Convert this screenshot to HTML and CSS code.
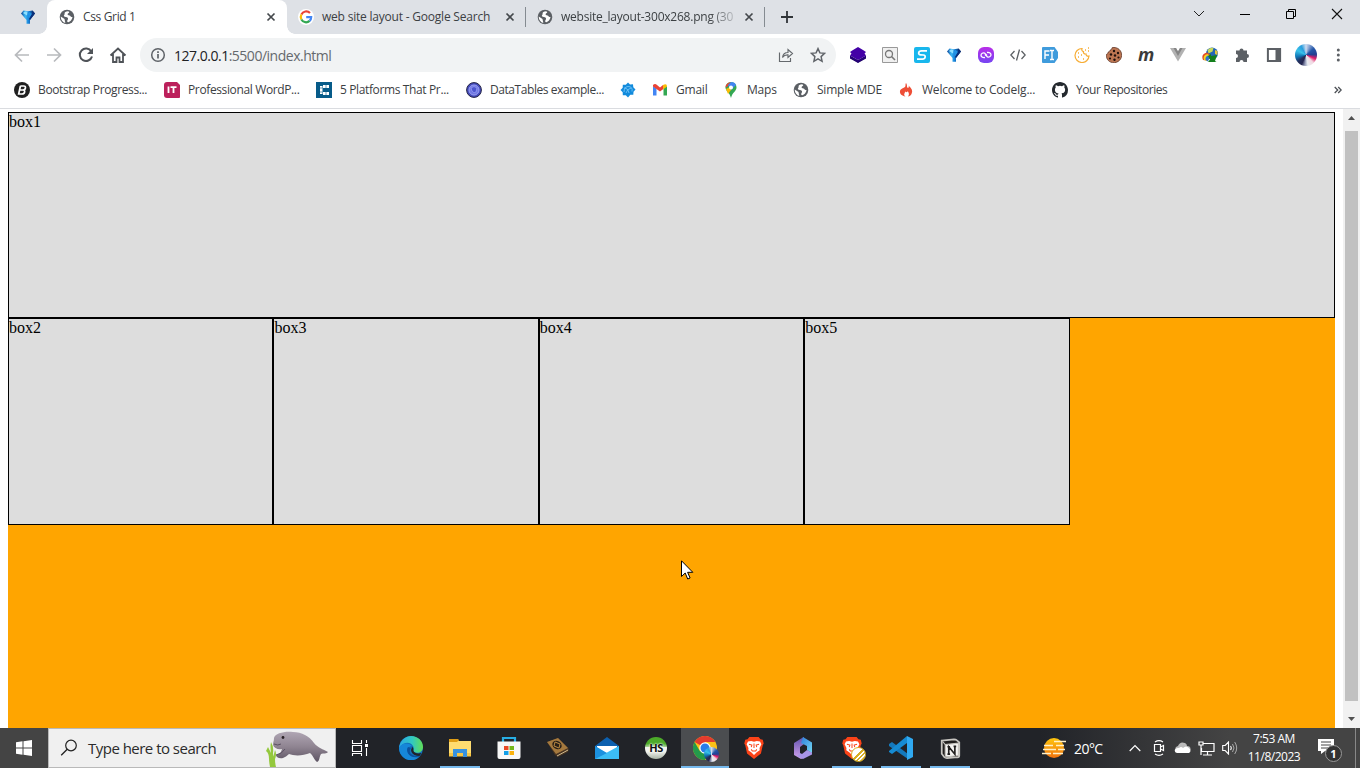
FILE: index.html
```html
<!DOCTYPE html>
<html lang="en">
<head>
<meta charset="utf-8">
<title>Css Grid 1</title>
<link rel="stylesheet" href="styles.css">
</head>
<body>
<svg class="defs" width="0" height="0">
  <defs>
    <linearGradient id="gem" x1="0" y1="0" x2="1" y2="0"><stop offset="0" stop-color="#0b3f94"/><stop offset=".3" stop-color="#3db9f5"/><stop offset=".55" stop-color="#1680d8"/><stop offset="1" stop-color="#061c52"/></linearGradient>
    <linearGradient id="edgeTop" x1="0" y1="0" x2="1" y2="0"><stop offset="0" stop-color="#2aa8e5"/><stop offset=".55" stop-color="#32c8c0"/><stop offset="1" stop-color="#62df55"/></linearGradient>
    <linearGradient id="manatee" x1="0" y1="0" x2="0" y2="1"><stop offset="0" stop-color="#b0a6b4"/><stop offset=".5" stop-color="#8f8491"/><stop offset="1" stop-color="#5d5463"/></linearGradient>
    <linearGradient id="mailG" x1="0" y1="0" x2="1" y2="1"><stop offset="0" stop-color="#1a8bdd"/><stop offset="1" stop-color="#46cbff"/></linearGradient>
    <linearGradient id="mA" x1="0" y1="0" x2="0" y2="1"><stop offset="0" stop-color="#6152ae"/><stop offset="1" stop-color="#d3a3ee"/></linearGradient>
    <linearGradient id="mB" x1="0" y1="0" x2="1" y2="1"><stop offset="0" stop-color="#2d7edb"/><stop offset="1" stop-color="#74d9f4"/></linearGradient>
    <linearGradient id="sunG" x1="0" y1="0" x2="0" y2="1"><stop offset="0" stop-color="#ffc60d"/><stop offset="1" stop-color="#f0720e"/></linearGradient>
    <linearGradient id="pur" x1="0" y1="0" x2="0" y2="1"><stop offset="0" stop-color="#b92de8"/><stop offset="1" stop-color="#7546f2"/></linearGradient>
    <symbol id="i-gem" viewBox="0 0 16 16"><path d="M1 4.500 3.500 1.500 8 2.200l4.500-.7L15 4.500 10 11v3.800H6.500V11z" fill="url(#gem)"/><path d="M3 4l2-1.500h2.500L7 6.500z" fill="#8fe0ff"/><path d="m8 4 1.500-1 2.500 2-3.500 5z" fill="#2293e6"/><path d="M12.500 1.500 15 4.500 10 11l-1-1 3-5z" fill="#0a2f7a"/></symbol>
    <symbol id="i-globe" viewBox="0 0 16 16"><circle cx="8" cy="8" r="7.300" fill="#5b5f64"/><path d="M9.200 2.200c-2.300 0-4 1.200-3.600 2.500.3 1-1.200 1.500-.6 2.600.6.900 3.100.3 3.900 1.600.7 1.300-1 2.200-.7 3.500.2.800 1.200 1.200 2.500.2 1.600-1.100 2.600-2.900 2.800-4.600-.9.300-1.800-.3-2.400-1.200-.7-.9-2.300-.5-2.500-1.400-.3-1 1.600-1.300 1.700-2.200z" fill="#fff"/><path d="M1.700 7.500 5.500 9.900l.8 4.200C3.800 13.300 1.700 11 1.700 7.500z" fill="#fff"/></symbol>
    <symbol id="i-x" viewBox="0 0 10 10"><path d="m1.500 1.500 7 7m0-7-7 7" stroke="#44484c" stroke-width="1.700" fill="none"/></symbol>
    <symbol id="i-brave" viewBox="0 0 22 26"><path d="M6 1h10l2 2.500 2.500.5 1 4-1 2-2 9L11 25l-7.500-6-2-9-1-2 1-4L4 3.500z" fill="#fb4318"/><path d="m4.500 6 3.500-.5 3 .8 3-.8 3.500.5L19 9l-2 4 .2 2.500-3.200 2-3 3.200-3-3.200-3.200-2L5 13 3 9z" fill="#fff"/><path d="m5.500 9 3.200.8L8 12m8.500-3-3.200.8.700 2.200M11 8v5M8 14.500l1.200 1.700h3.600l1.200-1.700" stroke="#fb4318" stroke-width="1.100" fill="none"/></symbol>
  </defs>
</svg>
<div class="desktop">
  <header class="tabs">
    <div class="pinned"><svg width="16" height="16"><use href="#i-gem"/></svg></div>
    <div class="tab active"><svg width="16" height="16"><use href="#i-globe"/></svg><span class="title t1">Css Grid 1</span><svg class="close" width="10" height="10"><use href="#i-x"/></svg></div>
    <div class="tab second"><svg width="16" height="16" viewBox="0 0 16 16"><circle cx="8" cy="8" r="8" fill="#fff"/><g fill="none" stroke-width="2.200"><path d="M12 4A5.300 5.300 0 0 0 3.400 5.500" stroke="#ea4335"/><path d="M3.400 5.500a5.300 5.300 0 0 0 0 5" stroke="#fbbc05"/><path d="M3.400 10.500a5.300 5.300 0 0 0 8.200 1.400" stroke="#34a853"/><path d="M11.600 11.900A5.200 5.200 0 0 0 13.200 8.100H8.200" stroke="#4285f4"/></g></svg><span class="title t2">web site layout - Google Search</span><svg class="close" width="10" height="10"><use href="#i-x"/></svg></div>
    <div class="tab third"><svg width="16" height="16"><use href="#i-globe"/></svg><span class="title t3">website_layout-300x268.png (30</span><svg class="close" width="10" height="10"><use href="#i-x"/></svg></div>
    <svg class="plus" width="12" height="12" viewBox="0 0 12 12"><path d="M6 0v12M0 6h12" stroke="#303438" stroke-width="1.800"/></svg>
    <div class="window-buttons">
      <svg viewBox="0 0 46 28"><path d="m18 11 5 5 5-5" stroke="#222" fill="none"/></svg>
      <svg viewBox="0 0 46 28"><path d="M18 14.500h10" stroke="#000"/></svg>
      <svg viewBox="0 0 46 28"><path d="M18.500 11.500h7v7h-7zM20.500 11v-1.500h7v7H26" stroke="#000" fill="none"/></svg>
      <svg viewBox="0 0 46 28"><path d="m18 9 10 10m0-10L18 19" stroke="#111" stroke-width="1.100"/></svg>
    </div>
  </header>

  <div class="toolbar">
    <div class="nav">
      <svg viewBox="0 0 32 42"><path d="M29 21H16m6-6.500L15.500 21l6.500 6.500" stroke="#b8babd" stroke-width="1.700" fill="none"/></svg>
      <svg viewBox="0 0 32 42"><path d="M15 21h13m-6-6.500 6.500 6.500-6.500 6.500" stroke="#b8babd" stroke-width="1.700" fill="none"/></svg>
      <svg viewBox="0 0 32 42"><path d="M27.300 17.500A6.200 6.200 0 1 0 28 22.500" stroke="#4f5358" stroke-width="2" fill="none"/><path d="M29 14v6h-6z" fill="#4f5358"/></svg>
      <svg viewBox="0 0 32 42"><path d="M14.500 21.500 22 14.500l7.500 7M17 20v8h3.500v-4.500h3V28H27v-8" stroke="#4f5358" stroke-width="1.800" fill="none"/></svg>
    </div>
    <div class="omnibox">
      <svg width="16" height="16" viewBox="0 0 16 16"><circle cx="8" cy="8" r="6.300" stroke="#5f6368" stroke-width="1.500" fill="none"/><path d="M8 7v4.500M8 4.200v1.700" stroke="#5f6368" stroke-width="1.700"/></svg>
      <span class="url"><b>127.0.0.1</b>:5500/index.html</span>
      <svg class="share" width="16" height="16" viewBox="0 0 16 16"><path d="M1.500 5.500v9h11V11M4.500 10.500C5 7 7 5.500 10 5.500V2.500L14.500 6.500 10 10.500v-2.600c-2.500-.2-4.200.7-5.500 2.600z" stroke="#65696d" stroke-width="1.150" fill="none"/></svg>
      <svg width="16" height="16" viewBox="0 0 16 16"><path d="m8 1.600 1.900 4.300 4.700.5-3.500 3.200 1 4.700L8 11.900l-4.100 2.400 1-4.700L1.400 6.400l4.700-.5z" stroke="#5f6368" stroke-width="1.450" fill="none"/></svg>
    </div>
    <div class="extensions">
      <svg viewBox="0 0 16 16"><path d="M0 9.500 8 14l8-4.500v2L8 16l-8-4.500z" fill="#1d0062"/><path d="m0 5 3-2 5-3 5 3 3 2-1.500 1.500L16 8.500 8 13 0 8.500l1.500-2z" fill="#4300a6"/><path d="m0 8.500 8 4.500 8-4.500v2.300L8 15.500l-8-4.700z" fill="#25007a"/></svg>
      <svg viewBox="0 0 16 16"><path d="M.5.500h15v15H.5z" fill="#f0f0f0" stroke="#999"/><circle cx="7" cy="7" r="3.500" stroke="#777" stroke-width="1.300" fill="none"/><path d="m9.500 9.500 3.500 3.500" stroke="#777" stroke-width="1.600"/></svg>
      <svg viewBox="0 0 16 16"><rect width="16" height="16" rx="2" fill="#18b7ed"/><path d="M13 3.800H7.500C4 3.800 3.800 7.700 6.500 7.800l3 .2c2.700.2 2 4.100-1 4.100H3" stroke="#fff" stroke-width="1.700" fill="none"/></svg>
      <svg viewBox="0 0 16 16"><use href="#i-gem"/></svg>
      <svg viewBox="0 0 16 16"><rect width="16" height="16" rx="6" fill="url(#pur)"/><path d="M7 10.500C4.500 11 2.800 9.500 3 8s2-2.500 3.500-2L9 8.500M9 5.500c2.500-.5 4.200 1 4 2.500s-2 2.500-3.500 2L7 7.500" stroke="#fff" stroke-width="1.300" fill="none"/></svg>
      <svg viewBox="0 0 16 16"><path d="M4.500 4 .8 8l3.700 4m7-8 3.700 4-3.700 4M9.500 2.500l-3 11" stroke="#5c6064" stroke-width="1.300" fill="none"/></svg>
      <svg viewBox="0 0 16 16"><path d="M1 0h11.500L16 5v6l-3.500 5H1q-1 0-1-1V1q0-1 1-1z" fill="#3f9bdc"/><path d="M3 12V4h4.500M3 8h4M8 3.500h1.500q.5 0 .5.500v8q0 .5-.5.500H8M12 3.500h-1.500M12 12.500h-1.500" stroke="#fff" stroke-width="1.400" fill="none"/></svg>
      <svg viewBox="0 0 16 16"><path d="M8 1.500a7 7 0 1 0 7 7.500c-2 .5-3-.5-3-2-2 .2-2.800-1-2.500-2.500C8 4.300 7.500 3 8 1.500z" stroke="#f7ad35" stroke-width="1.200" fill="none"/><path d="M4 6h1m2 2h1m-4 2h1m4 2h1m1-9h1m2 1h1m-1-3h1" stroke="#f7ad35" stroke-width="1.400"/></svg>
      <svg viewBox="0 0 16 16"><path d="M6 .8C8 0 13 .5 15 5c2 5-1 10-6.500 10.700C3 16 0 12 .3 7.500 1.500 7 2.500 6.200 2 5c1.500 0 2.200-.7 2-2 1 .1 1.900-.5 2-2.200z" fill="#bd7652" stroke="#5f3627" stroke-width=".8"/><g fill="#20100d"><circle cx="8" cy="4" r="1.200"/><circle cx="12" cy="6" r="1.200"/><circle cx="5" cy="7.500" r="1.200"/><circle cx="9" cy="8.500" r="1.200"/><circle cx="12.500" cy="10.500" r="1.100"/><circle cx="4" cy="11.500" r="1.100"/><circle cx="8.500" cy="12.800" r="1.200"/></g></svg>
      <span class="letter-m">m</span>
      <svg viewBox="0 0 16 16"><path d="M0 1h6l2 3.500L10 1h6L8 14.500z" fill="#b2b2b2"/><path d="M3.500 1H6l2 3.500L10 1h2.500L8 9z" fill="#858585"/></svg>
      <svg viewBox="0 0 16 16"><circle cx="10" cy="6.500" r="6" fill="#2466b6"/><path d="M5.500 3q3-3 6-2l-1 3.500-4 2z" fill="#c7d95a"/><path d="m13 3 2.500 1v4L13 7z" fill="#e2c53e"/><path d="M1 13Q-1.500 7 5 5.500l3 2-3 3v3z" fill="#e24a26"/><path d="M2 13Q.5 8 5.500 7L8 9l-3 5z" fill="#f4d51f"/><path d="M3.500 13Q3 9.500 6 8.500l2 1-2 5z" fill="#2e74c9"/><path d="m6 9 3-2v2l6-1-2 6 1.500 1H6l2-2.500z" fill="#14801d"/></svg>
      <svg viewBox="0 0 16 16"><path d="M2 3.500h3.500a2 2 0 1 1 4 0H13V7a2 2 0 1 1 0 4v4H9.500a2 2 0 0 0-4 0H2v-4a2 2 0 0 0 0-4z" fill="#5c6065"/></svg>
      <svg viewBox="0 0 16 16"><path d="M1.900 1.900h12.200v12.200H1.900zM10.500 2v12" stroke="#5c6065" stroke-width="2" fill="none"/><path d="M10 2h4v12h-4z" fill="#5c6065"/></svg>
      <span class="avatar"></span>
      <svg viewBox="0 0 16 16"><circle cx="8.300" cy="3" r="1.500" fill="#5c6065"/><circle cx="8.300" cy="8" r="1.500" fill="#5c6065"/><circle cx="8.300" cy="13" r="1.500" fill="#5c6065"/></svg>
    </div>
  </div>

  <nav class="bookmarks">
    <a class="w150 tight"><svg viewBox="0 0 16 16"><circle cx="8" cy="8" r="8" fill="#202020"/><path d="M6.300 4h3.500q2 0 1.600 2t-2.400 2H5.500m3.500 0q2 0 1.600 2t-2.600 2H4.700L6.400 4" stroke="#fff" stroke-width="1.700" fill="none"/></svg><span>Bootstrap Progress...</span></a>
    <a class="w152 tight"><svg viewBox="0 0 16 16"><path d="M3 0h10l3 3v12q0 1-1 1H3q-3 0-3-3V3q0-3 3-3z" fill="#bc205b"/><path d="M4.500 4.500V11M6.500 5.200h6M9.500 5v6" stroke="#fff" stroke-width="1.800"/></svg><span>Professional WordP...</span></a>
    <a class="w150 tight"><svg viewBox="0 0 16 16"><path d="M0 0h16v16H0z" fill="#075b89"/><path d="M4 4h2.500v8H4zM7 3h6v3H7zM7 10h6v3H7z" fill="#fff"/><path d="M3 6h3.500M3 10h3.500M10 3v3M10 10v3" stroke="#075b89" stroke-width=".6"/></svg><span>5 Platforms That Pr...</span></a>
    <a class="w154 tighter"><svg viewBox="0 0 16 16"><circle cx="8" cy="8" r="7.400" fill="#444bbd" stroke="#242443"/><circle cx="8" cy="8" r="5" fill="#7179e4" stroke="#9ba1f2"/><path d="M5 6q3-3 6 0l-1 4q-2 2-4-1z" fill="#4c55cf" stroke="#a7adfa" stroke-width=".6"/></svg><span>DataTables example...</span></a>
    <a class="w32"><svg viewBox="0 0 16 16"><path d="m8 .5 2 2 3-.3.300 3 2.200 2.300-2 2.200-.200 3-3 .1L8 15.500l-2.200-2.200-3-.1-.1-3L.5 8l2.200-2.200.1-3 3-.1z" fill="#128bdc"/><path d="M4 10q0-5 4-5.500 5 0 4 5M4 6q4 0 5 5M6 11q1-4 5-5" stroke="#8bd2ff" stroke-width=".7" fill="none"/></svg></a>
    <a class="w71"><svg viewBox="0 0 16 16"><path d="M1 13.500V4l3.500 2.500v7z" fill="#4285f4"/><path d="M11.500 13.500v-7L15 4v9.500z" fill="#34a853"/><path d="M1 3q2-2 4 0l3 2.500L11 3v4.200L8 9.500 1 4.500z" fill="#ea4335"/><path d="M11 3q4-2 4 1.500l-4 3z" fill="#fbbc04"/></svg><span>Gmail</span></a>
    <a class="w70"><svg viewBox="0 0 16 16"><path d="M8 0a5.300 5.300 0 0 0-5.500 5.300C2.500 9.500 6.500 10 8 16c1.500-6 5.500-6.500 5.500-10.700A5.300 5.300 0 0 0 8 0z" fill="#34a853"/><path d="M8 0 4 5 2.500 5.500Q2.500 1 8 0z" fill="#ea4335"/><path d="M8 0q4 0 5 3L8 8 5 3z" fill="#4285f4"/><path d="m3 7 4-2 1 3-3 4z" fill="#fbbc04"/><circle cx="8" cy="5.400" r="2" fill="#fff"/></svg><span>Maps</span></a>
    <a class="w105"><svg><use href="#i-globe"/></svg><span>Simple MDE</span></a>
    <a class="w154"><svg viewBox="0 0 16 16"><path d="M8 1c2 3 0 4 2 5 1-.5 1-1.300.5-2.500C14 6.500 15 9 13.500 12c-.7 1.400-2 2.200-3.500 2.600 1.600-2 1-4-.5-5.600 0 1.500-1 1.500-2 .5-1.500 2-2 4 0 5C4 14 1.500 12 2 9c.4-2.500 4-3 5-4C8 4 7 2 8 1z" fill="#ee4e36"/></svg><span>Welcome to CodeIg...</span></a>
    <a class="w140 tighter"><svg viewBox="0 0 16 16"><path fill="#24292e" d="M8 0C3.580 0 0 3.580 0 8c0 3.540 2.290 6.530 5.470 7.590.4.070.55-.17.55-.38 0-.19-.010-.82-.010-1.490-2.010.37-2.530-.49-2.690-.94-.09-.23-.48-.94-.82-1.130-.28-.15-.68-.52-.010-.53.63-.010 1.080.58 1.230.82.72 1.210 1.870.87 2.330.66.070-.52.28-.87.51-1.070-1.780-.2-3.640-.89-3.640-3.950 0-.87.31-1.590.82-2.150-.08-.2-.36-1.020.08-2.120 0 0 .67-.21 2.200.82a7.500 7.500 0 0 1 4 0c1.530-1.040 2.200-.82 2.200-.82.44 1.100.16 1.920.08 2.120.51.56.82 1.270.82 2.150 0 3.070-1.870 3.750-3.650 3.950.29.25.54.73.54 1.480 0 1.070-.010 1.930-.010 2.200 0 .21.15.46.55.38A8.010 8.010 0 0 0 16 8c0-4.420-3.580-8-8-8z"/></svg><span>Your Repositories</span></a>
    <svg class="more" width="8" height="8" viewBox="0 0 8 8"><path d="m.7 1 3 3-3 3m3.500-6 3 3-3 3" stroke="#4c5055" stroke-width="1.300" fill="none"/></svg>
  </nav>

  <main class="viewport">
    <div class="grid">
      <div class="box wide">box1</div>
      <div class="box">box2</div>
      <div class="box">box3</div>
      <div class="box">box4</div>
      <div class="box">box5</div>
    </div>
    <div class="scrollbar">
      <svg width="17" height="17" viewBox="0 0 17 17"><path d="m5 11 3.500-4 3.500 4z" fill="#505050"/></svg>
      <div class="thumb"></div>
      <svg width="17" height="17" viewBox="0 0 17 17"><path d="m5 6 3.500 4L12 6z" fill="#505050"/></svg>
    </div>
    <svg class="cursor" width="13" height="21" viewBox="0 0 13 21"><path d="M.5.800v15.700l3.700-3.500 2.500 6 2.400-1-2.500-5.700h5.200z" fill="#fff" stroke="#000"/></svg>
  </main>

  <footer class="taskbar">
    <div class="start"><svg width="16" height="16" viewBox="0 0 16 16"><path d="M0 2.200 6.500 1.300v6.200H0zM7.500 1.200 16 0v7.500H7.500zM0 8.500h6.500v6.200L0 13.800zM7.500 8.500H16V16l-8.500-1.200z" fill="#fff"/></svg></div>
    <div class="search">
      <svg width="18" height="18" viewBox="0 0 18 18"><circle cx="11" cy="6.500" r="5.300" stroke="#222" stroke-width="1.200" fill="none"/><path d="m7.200 10.300-6 6" stroke="#222" stroke-width="1.300"/></svg>
      <span>Type here to search</span>
      <svg class="sea" width="64" height="38" viewBox="0 0 64 38"><path d="M8 9C9 4 19 2 27 3c9 0 16 4 21 11 4 5 9 6 14 9-1 2-5 1-7 2-2 3-1 7-4 8-3-2-4-7-7-9-7 3-16 3-21 1-2 2-4 3-6 4-4 1-7-1-7-3 3-1 5-2 6-6-4 1-8-1-9-4 0-3 1-4 1-7z" fill="url(#manatee)"/><path d="M10 26q6-1 9-6M8 15q4 2 7 0" stroke="#5c5263" fill="none"/><circle cx="17" cy="8.500" r="1.400" fill="#2a2025"/><path d="M4 38q-1-5-1-8 0-6-3-8l2-4q2 4 3 6-1-6 0-11 3 5 2 11 1 8 0 14zM7 38q-1-6 0-9l2-8q2 4 0 9 0 4 1 8z" fill="#94c83d"/></svg>
    </div>
    <div class="view"><svg width="18" height="16" viewBox="0 0 18 16"><path d="M1.500 0v3.500h9V0M1.500 5.500h9v6h-9zM1.500 16v-2.500h9V16M15.500 0v3M15.500 8v8" stroke="#fff" stroke-width="1.100" fill="none"/><path d="M14 4h3v3h-3z" fill="#fff"/></svg></div>
    <div class="apps">
      <div class="app"><svg viewBox="0 0 24 24"><circle cx="12" cy="12" r="12" fill="#1270bd"/><path d="M0 12C1 4 7 0 12 0c7 0 12 5 12 11 0 5-5 7-9 5-2-1 1-3-1-6C11 5 4 6 0 12z" fill="url(#edgeTop)"/><path d="M0 12c2-5 9-6 13-2-4 0-5 4-3 8 2 3 7 4 11 2-5 6-13 5-17 1Q0 17 0 12z" fill="#1687d9"/><path d="M9 11c-3 4 1 12 11 10l1-1q-5 1-9-2c-2-2-1-5 0-6z" fill="#0b519d"/><path d="M12 14q1-2 1-3.500Q15 12 14.500 15q1 2 5 2.500l3-.5-2 3q-6 0-8-4z" fill="#212329"/></svg></div>
      <div class="app open"><svg viewBox="0 0 24 24"><path d="M1 4q0-1 1-1h7l2 2h12v15H1z" fill="#ffdc70"/><path d="M1 3h9l1 1-2 2H1z" fill="#df9d15"/><path d="M1 17h22v3.500H1z" fill="#f8c644"/><path d="M5 13h14v8h-4v-4H9v4H5z" fill="#3892df"/></svg></div>
      <div class="app"><svg viewBox="0 0 24 24"><path d="M6 6V2h12v4" stroke="#27aee5" stroke-width="2.200" fill="none"/><path d="M.5 5.500h23V21q0 2-2 2h-19q-2 0-2-2z" fill="#f7f7f7"/><path d="M7 10h4.500v4H7z" fill="#e94925"/><path d="M12.500 10H17v4h-4.500z" fill="#75b719"/><path d="M7 15h4.500v4H7z" fill="#129ee8"/><path d="M12.500 15H17v4h-4.500z" fill="#fbb20c"/></svg></div>
      <div class="app"><svg viewBox="0 0 24 24"><path d="m1 6 11-4 11 11-1 3-10 5L9 19z" fill="#493421"/><path d="m1 6 11-4 10 10-12 6z" fill="#a5793e"/><path d="m11 20 11-6" stroke="#d1bd92"/><ellipse cx="11" cy="9" rx="5" ry="4" transform="rotate(35 11 9)" fill="#2a2018"/><path d="m9 6 5 2-1 4-5-2z" stroke="#b98942" fill="none"/></svg></div>
      <div class="app"><svg viewBox="0 0 24 24"><path d="M0 10 12 1l12 9v3H0z" fill="#0c60af"/><path d="M2 10h20v8H2z" fill="#fff"/><path d="m0 10 12 8 12-8v13H0z" fill="url(#mailG)"/><path d="m0 23 24-13v13z" fill="#3cbdf5"/><path d="m0 10 12 7-12 6z" fill="#1c91df"/></svg></div>
      <div class="app"><div class="hs">HS</div></div>
      <div class="app open current"><svg viewBox="0 0 24 24"><circle cx="12" cy="12" r="12" fill="#fbc116"/><path d="M12 12 1.600 6A12 12 0 0 1 22.400 6H12z" fill="#e33b2e"/><path d="M1.600 6A12 12 0 0 0 12 24l5.200-9L12 12 6.800 15z" fill="#249a4b"/><circle cx="12" cy="12" r="5.700" fill="#fff"/><circle cx="12" cy="12" r="4.500" fill="#297cea"/></svg><i class="badge-avatar"></i></div>
      <div class="app"><svg viewBox="0 0 24 24"><use href="#i-brave"/></svg></div>
      <div class="app"><svg viewBox="0 0 24 24"><path d="m11 2 2-1v7l-4 3v7l3 4-2 1-7-4V7z" fill="url(#mA)"/><path d="m12 1 9 5.500V17l-5-3v-4l-6-3z" fill="url(#mB)"/><path d="m9 17 2 1 5-4 5 2.500v2L12 23l-6-3z" fill="#a895e8"/></svg></div>
      <div class="app open"><svg viewBox="0 0 24 24"><use href="#i-brave"/></svg><i class="badge-gold"></i></div>
      <div class="app open"><svg viewBox="0 0 24 24"><path d="m0 8 3-2 16 12v5L0 10z" fill="#1479bd"/><path d="M0 15 18 0v7L3 18l-3-2z" fill="#168bd3"/><path d="m18 0 6 3v18l-6 3z" fill="#30a9f1"/></svg></div>
      <div class="app open"><svg class="notion" viewBox="0 0 24 24"><path d="m2 3 14-1.500q2 0 3 1l3 2.500v15q0 2-2 2L8 23q-2 0-3-1l-3-4z" fill="#211f1e" stroke="#c7c5c0" stroke-width="2"/><path d="M6 7.500 21 6v14L8 21.500q-2 0-2-2zM3 4l3 3.500" fill="#f5f4f2" stroke="#c7c5c0" stroke-width="1.300"/><path d="M10 18.500V10l7 8.500V9.500M8.500 10h3m4-.5h3M8.500 18.500h3" stroke="#211f1e" stroke-width="1.900" fill="none"/></svg></div>
    </div>
    <div class="tray">
      <svg class="sun" width="24" height="22" viewBox="0 0 24 22"><circle cx="12" cy="11" r="10" fill="url(#sunG)"/><path d="M12 4.500h12M2 8.500h9m3 0h8M1 12.500h13m2 0h7M0 16.500h9m2 0h10" stroke="#fff0c8" stroke-width="1.400"/></svg>
      <span class="temp">20°C</span>
      <svg class="up" width="12" height="8" viewBox="0 0 12 8"><path d="m.7 7 5.300-5.500L11.300 7" stroke="#fff" stroke-width="1.200" fill="none"/></svg>
      <svg class="cam" width="12" height="16" viewBox="0 0 12 16"><path d="M2 2Q6-.6 10 2M2 14q4 2.600 8 0M1.500 4.500h6v7h-6zM7.500 7l3-1.500v5l-3-1.500" stroke="#fff" stroke-width="1.200" fill="none"/></svg>
      <svg class="cloud" width="17" height="12" viewBox="0 0 17 12"><path d="M2 8Q0 5 4 4q2-5 7-3 2 1 2 3 4 0 3.500 4z" fill="#bbb"/><path d="M3 11q-3-1-2-3.500 1-2 4-1.500 2-2 4 0 3-3 6 0 3 3 0 5z" fill="#fff"/></svg>
      <svg class="net" width="17" height="15" viewBox="0 0 17 15"><path d="M5 2.500h11v8H3.500V7M9.500 10.500V14M5 14h9M1 1h4v3H1zM3 4v10" stroke="#fff" stroke-width="1.200" fill="none"/></svg>
      <svg class="vol" width="16" height="14" viewBox="0 0 16 14"><path d="M.7 4.500h2.500L6.500 1v12L3.200 9.500H.7zM8.500 5q1.500 2 0 4" stroke="#fff" stroke-width="1.100" fill="none"/><path d="M10.500 3q3 4 0 8M12.700 1q4 6 0 12" stroke="#aaa" fill="none"/></svg>
      <div class="clock"><span class="time">7:53 AM</span><span class="date">11/8/2023</span></div>
      <div class="notice"><svg width="16" height="16" viewBox="0 0 16 16"><path d="M0 0h16v12H7l-4 3v-3H0z" fill="#fff"/><path d="M3 3h10M3 6h10M3 9h7" stroke="#444"/></svg><b>1</b></div>
      <i class="edge"></i>
    </div>
  </footer>
</div>
</body>
</html>
```

FILE: styles.css
```css
* { box-sizing: border-box; }
body { margin: 0; background: #fff; overflow: hidden; }
svg { display: block; flex: none; }
.defs { position: absolute; }
.desktop { width: 1360px; height: 768px; display: flex; flex-direction: column; overflow: hidden; font-family: "Open Sans", sans-serif; font-size: 12px; color: #3c4043; }

/* Tab strip */
.tabs { height: 34px; flex: none; display: flex; align-items: center; background: #dee1e6; }
.pinned { width: 47px; height: 34px; padding: 9px 0 0 20px; }
.tab { height: 34px; display: flex; align-items: center; padding: 0 11px 0 12px; }
.tab.active { width: 240px; background: #fff; border-radius: 8px 8px 0 0; position: relative; }
.active::before, .active::after { content: ""; position: absolute; bottom: 0; width: 8px; height: 8px; }
.active::before { left: -8px; background: radial-gradient(circle at 0 0, #dee1e6 7.500px, #fff 8px); }
.active::after { right: -8px; background: radial-gradient(circle at 100% 0, #dee1e6 7.500px, #fff 8px); }
.second { width: 239px; padding-left: 11px; position: relative; }
.third { width: 239px; position: relative; padding-left: 11px; }
.second::after, .third::after { content: ""; position: absolute; right: 0; top: 7px; width: 1px; height: 20px; background: #858b91; }
.title { margin-left: 8px; white-space: nowrap; line-height: 18px; }
.t1 { letter-spacing: -.35px; }
.t2 { letter-spacing: -.21px; }
.t3 { letter-spacing: -.23px; mask-image: linear-gradient(90deg, #000 86%, rgba(0, 0, 0, .25)); }
.close { margin-left: auto; }
.plus { margin-left: 16px; }
.window-buttons { margin-left: auto; display: flex; align-self: flex-start; }
.window-buttons svg { width: 46px; height: 28px; }

/* Toolbar */
.toolbar { height: 42px; flex: none; display: flex; align-items: center; }
.nav { display: flex; width: 140px; }
.nav svg { width: 32px; height: 42px; }
.omnibox { width: 696px; height: 34px; border-radius: 17px; background: #f1f3f4; display: flex; align-items: center; padding: 0 10px; }
.url { margin-left: 8px; font-size: 14px; letter-spacing: -.49px; color: #65696d; }
.url b { font-weight: 400; color: #202124; }
.share { margin-left: auto; margin-right: 16px; }
.extensions { display: flex; align-items: center; gap: 16px; padding-left: 14px; }
.extensions > svg { width: 16px; height: 16px; }
.letter-m { width: 16px; font: italic 700 18px/16px "Open Sans", sans-serif; color: #3a3a3a; margin-top: -3px; }
.avatar, .badge-avatar { border-radius: 50%; background: conic-gradient(#cfdcf0, #2456a8 14%, #233f91 24%, #e01e69 31%, #f3d8e2 38%, #e8ecf0 47%, #8f95b4 52%, #24264f 57%, #24305f 64%, #1175b5 72%, #38c3ea 83%, #2a9ddd 92%, #cfdcf0); }
.avatar { width: 22px; height: 22px; margin: 0 -3px; }

/* Bookmarks */
.bookmarks { height: 33px; flex: none; display: flex; align-items: center; padding: 0 18px 5px 14px; border-bottom: 1px solid #dadce0; }
.bookmarks a { display: flex; align-items: center; gap: 8px; white-space: nowrap; letter-spacing: -.22px; }
.bookmarks a svg { width: 16px; height: 16px; }
.bookmarks .tight { letter-spacing: -.37px; }
.bookmarks .tighter { letter-spacing: -.43px; }
.w150 { width: 150px; } .w152 { width: 152px; } .w154 { width: 154px; } .w32 { width: 32px; }
.w71 { width: 71px; } .w70 { width: 70px; } .w105 { width: 105px; } .w140 { width: 140px; }
.more { margin-left: auto; }

/* Page */
.viewport { height: 619px; flex: none; display: flex; position: relative; overflow: hidden; padding-left: 8px; }
.grid { width: 1327px; height: 619px; margin-top: 3px; display: grid; grid-template: repeat(3, 1fr) / repeat(5, 1fr); background: orange; flex: none; }
.box { border: 1px solid #000; background: #ddd; color: #000; font: 16px/18px "Liberation Serif", serif; }
.wide { grid-column: 1 / -1; }
.scrollbar { width: 17px; height: 619px; margin-left: 8px; background: #f1f1f1; display: flex; flex-direction: column; justify-content: space-between; }
.thumb { width: 13px; height: 570px; margin: 5px 2px auto; background: #c1c1c1; }
.cursor { position: absolute; left: 681px; top: 451px; }

/* Taskbar */
.taskbar { height: 40px; flex: none; display: flex; background: linear-gradient(90deg, #444 0, #444 48px, #212328 336px, #212328 1040px, #444 1230px, #444); color: #fff; }
.start { width: 48px; display: grid; place-items: center; }
.search { width: 288px; background: #f0f0f0; border: 1px solid #b9b9b9; display: flex; align-items: center; padding-left: 11px; color: #2b2b2b; font-size: 15px; }
.search span { margin-left: 10px; letter-spacing: -.52px; white-space: nowrap; }
.sea { margin-left: auto; margin-right: 5px; }
.view { width: 51px; display: flex; align-items: center; padding-left: 15px; }
.apps { display: flex; gap: 1px; }
.app { width: 48px; height: 40px; display: grid; place-items: center; position: relative; }
.app > svg { width: 24px; height: 24px; }
.app > .notion { width: 21px; height: 21px; }
.open::after { content: ""; position: absolute; left: 4px; right: 4px; bottom: 0; height: 2px; background: #76b9ed; }
.current { background: #4b4d50; }
.current::after { left: 0; right: 0; }
.hs { width: 22px; height: 22px; border-radius: 50%; background: linear-gradient(#4caa29 30%, #a9d59a 45%, #f2f4ef 46% 65%, #a8b3a5); color: #111; font: 700 11px/22px "Open Sans", sans-serif; text-align: center; letter-spacing: -.5px; text-shadow: 0 0 2px #fff, 0 0 2px #fff; }
.badge-avatar, .badge-gold { position: absolute; width: 15px; height: 15px; left: 23px; top: 19px; }
.badge-gold { border-radius: 50%; background: linear-gradient(135deg, #fff 45%, #d8ae24 46% 54%, #fff 55% 63%, #d8ae24 64% 72%, #fff 73% 80%, #d8ae24 81%); border: 1px solid #d8ae24; }
.tray { margin-left: auto; width: 318px; display: flex; align-items: center; }
.temp { margin-left: 8px; width: 41px; font-size: 14px; letter-spacing: -.55px; }
.up { margin-left: 14px; }
.cam { margin-left: 12px; }
.cloud { margin-left: 9px; }
.net { margin-left: 7px; }
.vol { margin-left: 7px; }
.clock { width: 62px; margin-left: 5px; display: flex; flex-direction: column; align-items: center; line-height: 18px; white-space: nowrap; }
.clock span { letter-spacing: -.48px; }
.notice { width: 24px; height: 22px; margin-left: 13px; margin-top: 4px; position: relative; }
.notice b { position: absolute; left: 7px; top: 6px; width: 17px; height: 17px; border: 1px solid #999; border-radius: 50%; background: #333; font-size: 11px; line-height: 15px; text-align: center; }
.edge { width: 1px; height: 40px; background: #888; margin-left: auto; margin-right: 4px; }
```
